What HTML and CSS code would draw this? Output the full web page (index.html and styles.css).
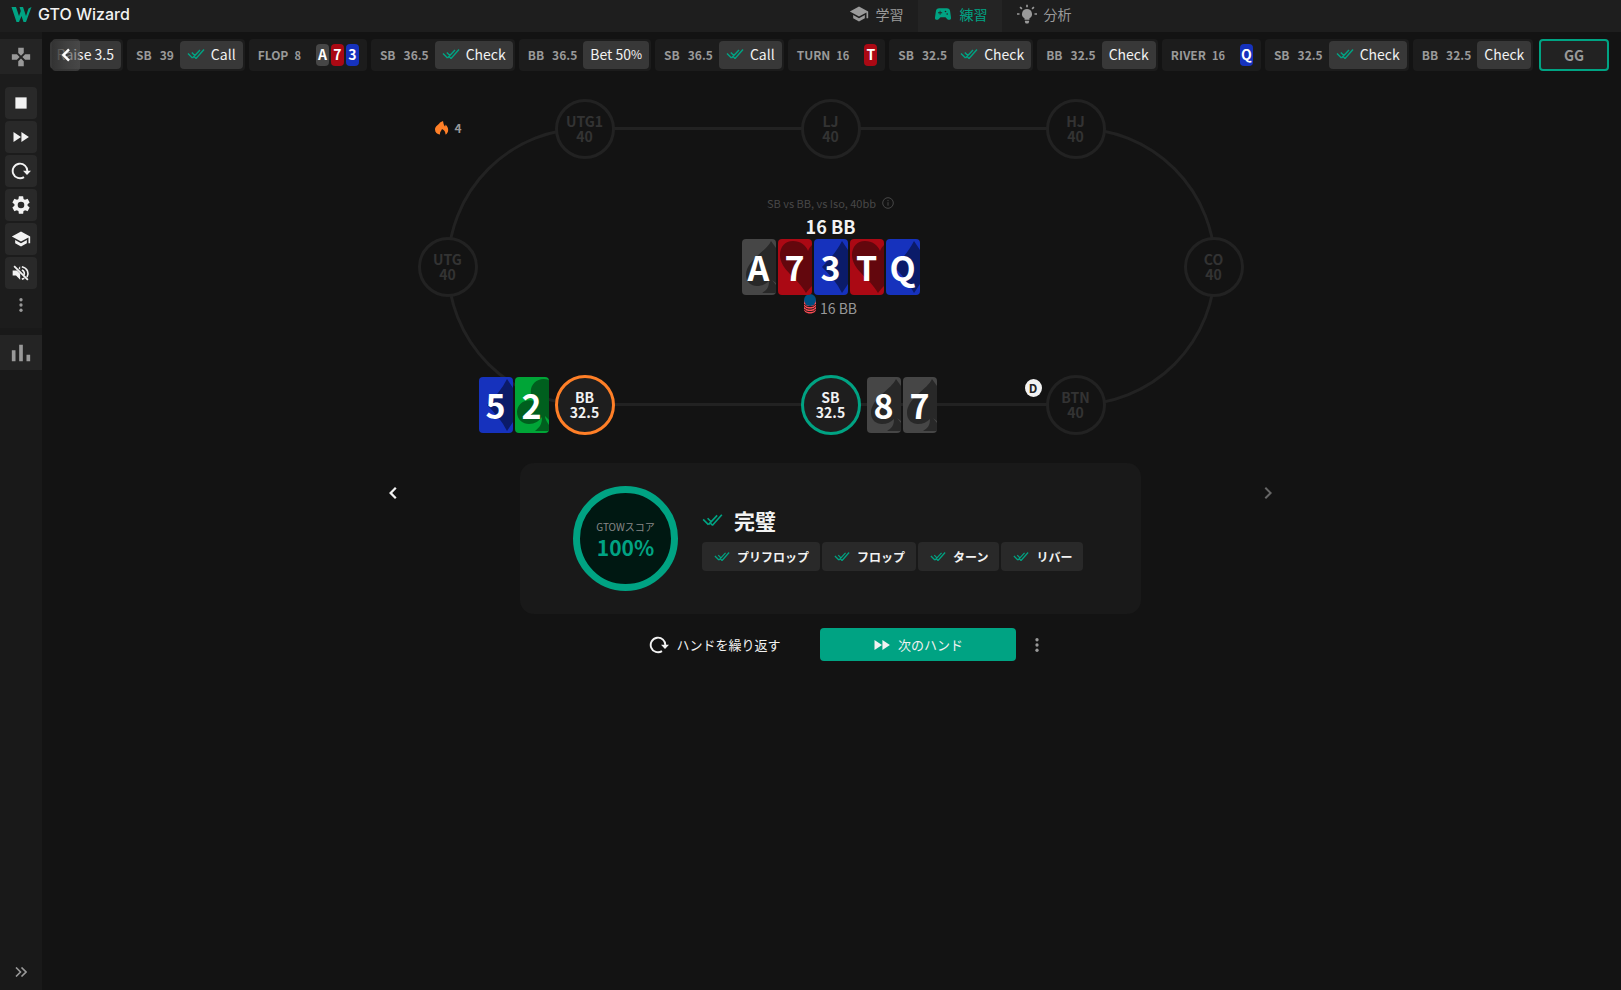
FILE: index.html
```html
<!DOCTYPE html>
<html lang="ja">
<head>
<meta charset="utf-8">
<title>GTO Wizard</title>
<link rel="stylesheet" href="styles.css">
</head>
<body>
<svg class="sprite" aria-hidden="true">
  <symbol id="checks" viewBox="0 0 18 12"><path d="M1 5.500l4.500 4.500M4.800 4.500l3 3M5.500 10L13 2M9 10.500L17 1.500M9 10.500L7.500 9" fill="none" stroke="currentColor" stroke-width="1.400"/></symbol>
  <symbol id="cap" viewBox="0 0 24 24"><path fill="currentColor" d="M5 13.200v4L12 21l7-3.800v-4L12 17l-7-3.800zM12 3L1 9l11 6 9-4.900V17h2V9L12 3z"/></symbol>
  <symbol id="ff" viewBox="0 0 24 24"><path fill="currentColor" d="M3 18l9-6-9-6v12zm9.500-12v12l9-6z"/></symbol>
  <symbol id="dots" viewBox="0 0 24 24"><g fill="currentColor"><circle cx="12" cy="5" r="2.200"/><circle cx="12" cy="12" r="2.200"/><circle cx="12" cy="19" r="2.200"/></g></symbol>
  <symbol id="repeat" viewBox="0 0 20 18"><path fill="none" stroke="currentColor" stroke-width="1.900" d="M16.300 9.500A7.300 7.300 0 1 0 13 15.100"/><path fill="currentColor" d="M12 8.800h8l-4 4.200z"/></symbol>
  <symbol id="left" viewBox="0 0 24 24"><path fill="currentColor" d="M15.600 7.600L14 6l-6 6 6 6 1.600-1.600L11.200 12z"/></symbol>
  <symbol id="right" viewBox="0 0 24 24"><path fill="currentColor" d="M8.600 16.600L10 18l6-6-6-6-1.400 1.400L13.200 12z"/></symbol>
  <symbol id="spade" viewBox="0 0 34 56"><path fill="currentColor" d="M29 2C25 12 4 21 4 36c0 7 5 11 11 11 5 0 9-2 12-5 0 6-2 9-7 12h14v-8l-4-5 4 3V9z"/></symbol>
  <symbol id="heart" viewBox="0 0 34 56"><path fill="currentColor" d="M34 6c-1 1-3 3-4 6C28 6 22 2 15 2 7 2 2 8 2 16c0 15 18 23 26 38 2-3 4-5 6-7z"/></symbol>
  <symbol id="diamond" viewBox="0 0 34 56"><path fill="currentColor" d="M28 2C23 12 16 20 8 28c8 8 15 16 20 26l6-9V11z"/></symbol>
  <symbol id="club" viewBox="0 0 34 56"><path fill="currentColor" d="M34 3C24-1 14 7 16 17c1 3 2 5 3 7C10 21 2 27 2 35c0 8 6 12 12 12 6 0 10-3 13-7 0 7-2 10-7 14h14v-6c-2-3-4-6-4-9l4 4z"/></symbol>
</svg>

<header class="topbar">
  <a class="brand" href="#"><svg class="brand-mark" viewBox="0 0 20 15"><path fill="#00a383" d="M0 0h4.500l3 9 1.800-5L8 0h3.500l3 9L17 1.500 20 0l-5.500 15h-2.500L10 9l-2.500 6H5z"/></svg>GTO Wizard</a>
  <nav class="tabs">
    <a class="tab" href="#"><svg class="i20"><use href="#cap"/></svg>学習</a>
    <a class="tab tab-on" href="#"><svg class="i20" viewBox="0 0 24 24"><path fill="currentColor" fill-rule="evenodd" d="M21.600 16.100l-1.100-7.800A4 4 0 0 0 16.500 5h-9a4 4 0 0 0-4 3.300l-1.100 7.800A2.550 2.550 0 0 0 4.900 19c.7 0 1.300-.3 1.800-.8L9 16h6l2.200 2.200c.5.500 1.200.8 1.800.8a2.550 2.550 0 0 0 2.600-2.900zM11 11H9v2H8v-2H6v-1h2V8h1v2h2v1zm4-1a1 1 0 1 1 0-2 1 1 0 0 1 0 2zm2 3a1 1 0 1 1 0-2 1 1 0 0 1 0 2z"/></svg>練習</a>
    <a class="tab" href="#"><svg class="i20" viewBox="0 0 24 24"><path fill="currentColor" d="M12 6a6 6 0 0 0-3 11.200V19h6v-1.800A6 6 0 0 0 12 6zM9.500 20h5v1.500l-1 2h-3l-1-2zM11 1h2v3h-2zM0 11h3v2H0zM21 11h3v2h-3zM3 4.400L4.400 3l2.200 2.200-1.400 1.400zM17.400 5.200L19.600 3 21 4.400l-2.200 2.200z"/></svg>分析</a>
  </nav>
</header>

<div class="app">
  <aside class="side">
    <button class="side-tab" aria-label="練習モード"><svg class="i22" viewBox="0 0 24 24"><path fill="currentColor" d="M15 7.500V2H9v5.500l3 3 3-3zM7.500 9H2v6h5.500l3-3-3-3zM9 16.500V22h6v-5.500l-3-3-3 3zM16.500 9l-3 3 3 3H22V9z"/></svg></button>
    <div class="tools">
      <button class="tool" aria-label="停止"><svg class="i18" viewBox="0 0 24 24"><path fill="currentColor" d="M4.500 4.500h15v15h-15z"/></svg></button>
      <button class="tool" aria-label="次へ"><svg class="i20"><use href="#ff"/></svg></button>
      <button class="tool" aria-label="繰り返す"><svg class="i20"><use href="#repeat"/></svg></button>
      <button class="tool" aria-label="設定"><svg class="i22" viewBox="0 0 24 24"><path fill="currentColor" d="M19.140 12.940c.04-.3.060-.61.060-.94s-.02-.64-.07-.94l2.030-1.580a.49.49 0 0 0 .12-.61l-1.920-3.320a.49.49 0 0 0-.59-.22l-2.390.96a7 7 0 0 0-1.620-.94l-.36-2.540A.48.48 0 0 0 13.920 2.400h-3.840c-.24 0-.43.170-.47.410l-.36 2.540c-.59.240-1.130.570-1.620.940l-2.390-.96a.48.48 0 0 0-.59.220L2.740 8.870a.48.48 0 0 0 .12.610l2.030 1.580c-.05.300-.09.630-.09.940s.02.640.070.940l-2.030 1.580a.49.49 0 0 0-.12.610l1.920 3.320c.12.220.37.290.59.220l2.390-.96c.5.380 1.030.700 1.620.940l.36 2.540c.05.240.24.410.48.410h3.840c.24 0 .44-.17.470-.41l.36-2.540c.59-.24 1.130-.56 1.620-.94l2.390.96c.22.080.47 0 .59-.22l1.920-3.320a.48.48 0 0 0-.12-.61zM12 15.600a3.600 3.600 0 1 1 0-7.200 3.600 3.600 0 0 1 0 7.200z"/></svg></button>
      <button class="tool" aria-label="学習"><svg class="i20"><use href="#cap"/></svg></button>
      <button class="tool" aria-label="ミュート"><svg class="i20" viewBox="0 0 24 24"><path fill="currentColor" d="M2 9v6h4l5 5v-7L7 9zM11 4L9 6.200l2 2zM3 4.500L4.500 3 21 19.500 19.500 21z"/><path fill="none" stroke="currentColor" stroke-width="2" d="M13 4.500c7 1.500 9 8 6.200 12.500M13 8.500c3 1 3.500 4 2.500 6M13 19.500l3-1.200"/></svg></button>
      <button class="tool tool-plain" aria-label="その他"><svg class="i18"><use href="#dots"/></svg></button>
    </div>
    <button class="side-tab" aria-label="統計"><svg class="i22" viewBox="0 0 24 24"><path fill="currentColor" d="M2 9h4v12H2zM10 3h4v18h-4zM18 14h4v7h-4z"/></svg></button>
    <button class="expand" aria-label="展開"><svg viewBox="0 0 12 10"><path fill="none" stroke="currentColor" stroke-width="1.600" d="M1 .5L5.500 5 1 9.500M6.500.5L11 5 6.500 9.500"/></svg></button>
  </aside>

  <main class="main">
    <div class="history">
      <button class="back" aria-label="戻る"><svg><use href="#left"/></svg></button>
      <div class="step step-first"><button class="act">Raise 3.5</button></div>
      <div class="step"><span class="pos">SB</span><span class="stack">39</span><button class="act"><svg class="chk"><use href="#checks"/></svg>Call</button></div>
      <div class="step street"><span class="pos">FLOP</span><span class="pot">8</span><span class="mini black">A</span><span class="mini red">7</span><span class="mini blue">3</span></div>
      <div class="step"><span class="pos">SB</span><span class="stack">36.5</span><button class="act"><svg class="chk"><use href="#checks"/></svg>Check</button></div>
      <div class="step"><span class="pos">BB</span><span class="stack">36.5</span><button class="act">Bet 50<small>%</small></button></div>
      <div class="step"><span class="pos">SB</span><span class="stack">36.5</span><button class="act"><svg class="chk"><use href="#checks"/></svg>Call</button></div>
      <div class="step street"><span class="pos">TURN</span><span class="pot">16</span><span class="mini red">T</span></div>
      <div class="step"><span class="pos">SB</span><span class="stack">32.5</span><button class="act"><svg class="chk"><use href="#checks"/></svg>Check</button></div>
      <div class="step"><span class="pos">BB</span><span class="stack">32.5</span><button class="act">Check</button></div>
      <div class="step street"><span class="pos">RIVER</span><span class="pot">16</span><span class="mini blue">Q</span></div>
      <div class="step"><span class="pos">SB</span><span class="stack">32.5</span><button class="act"><svg class="chk"><use href="#checks"/></svg>Check</button></div>
      <div class="step"><span class="pos">BB</span><span class="stack">32.5</span><button class="act">Check</button></div>
      <button class="gg">GG</button>
    </div>

    <section class="table">
      <svg class="felt" viewBox="0 0 832 336"><rect x="32" y="29.500" width="767" height="276" rx="138" fill="none" stroke="#222" stroke-width="3"/></svg>
      <div class="streak"><svg viewBox="0 0 14 14"><path fill="#ff7f27" d="M8 0c.5 2 .5 4 2 5.500.5-.5.500-1.500.500-2C13 6 13.500 8 13 10.500c-.5 1.500-1.500 3-2.500 3C10.500 11 9.500 9 7 8c-.5 2-2.500 3-2 5.500-3-.5-5-2-5-5C0 5 4 3.500 5 1.500z"/></svg>4</div>
      <div class="seat utg1"><span>UTG1</span><span>40</span></div>
      <div class="seat lj"><span>LJ</span><span>40</span></div>
      <div class="seat hj"><span>HJ</span><span>40</span></div>
      <div class="seat utg"><span>UTG</span><span>40</span></div>
      <div class="seat co"><span>CO</span><span>40</span></div>
      <div class="seat bb"><span>BB</span><span>32.5</span></div>
      <div class="seat sb"><span>SB</span><span>32.5</span></div>
      <div class="seat btn"><span>BTN</span><span>40</span></div>
      <span class="dealer">D</span>
      <div class="hand hand-bb"><span class="card blue"><svg><use href="#diamond"/></svg><b>5</b></span><span class="card green"><svg><use href="#club"/></svg><b>2</b></span></div>
      <div class="hand hand-sb"><span class="card black"><svg><use href="#spade"/></svg><b>8</b></span><span class="card black"><svg><use href="#spade"/></svg><b>7</b></span></div>
      <div class="center">
        <p class="spot">SB vs BB, vs Iso, 40bb <svg viewBox="0 0 12 12"><circle cx="6" cy="6" r="5.300" fill="none" stroke="currentColor"/><path stroke="currentColor" d="M6 5.200v3.500M6 3v1.200"/></svg></p>
        <p class="total">16 BB</p>
        <div class="board">
          <span class="card black"><svg><use href="#spade"/></svg><b>A</b></span><span class="card red"><svg><use href="#heart"/></svg><b>7</b></span><span class="card blue"><svg><use href="#diamond"/></svg><b>3</b></span><span class="card red"><svg><use href="#heart"/></svg><b>T</b></span><span class="card blue"><svg><use href="#diamond"/></svg><b>Q</b></span>
        </div>
        <p class="chips"><svg viewBox="0 0 12 20"><path fill="#ff4d55" d="M0 6h12v9c0 6-12 6-12 0z"/><path fill="none" stroke="#141414" d="M.5 10c1 3.500 10 3.500 11 0M.5 12.500c1 3.500 10 3.500 11 0M.5 15c1 3.500 10 3.500 11 0"/><circle cx="6" cy="6" r="6" fill="#005082"/></svg>16 BB</p>
      </div>
    </section>

    <section class="result">
      <button class="turn" aria-label="前へ"><svg><use href="#left"/></svg></button>
      <div class="panel">
        <div class="score"><span>GTOWスコア</span><strong>100%</strong></div>
        <div>
          <h1 class="verdict"><svg><use href="#checks"/></svg>完璧</h1>
          <div class="streets">
            <button><svg><use href="#checks"/></svg>プリフロップ</button>
            <button><svg><use href="#checks"/></svg>フロップ</button>
            <button><svg><use href="#checks"/></svg>ターン</button>
            <button><svg><use href="#checks"/></svg>リバー</button>
          </div>
        </div>
      </div>
      <button class="turn turn-off" aria-label="次へ"><svg><use href="#right"/></svg></button>
    </section>

    <div class="actions">
      <button class="again"><svg class="i20"><use href="#repeat"/></svg>ハンドを繰り返す</button>
      <button class="next"><svg class="i20"><use href="#ff"/></svg>次のハンド</button>
      <button class="more" aria-label="その他"><svg class="i18"><use href="#dots"/></svg></button>
    </div>
  </main>
</div>
</body>
</html>
```
FILE: styles.css
```css
* { box-sizing: border-box; }
body {
  margin: 0;
  min-height: 100vh;
  display: flex;
  flex-direction: column;
  background: #131313;
  color: #f2f2f2;
  font: 14px/20px "Noto Sans CJK JP", sans-serif;
}
button { border: 0; padding: 0; background: none; color: inherit; font: inherit; cursor: pointer; }
a { color: inherit; text-decoration: none; }
p, h1 { margin: 0; }
svg { display: block; flex: none; }
.sprite { position: absolute; width: 0; height: 0; }
.i18 { width: 18px; height: 18px; }
.i20 { width: 20px; height: 20px; }
.i22 { width: 22px; height: 22px; }

.topbar { display: grid; grid-template-columns: 1fr auto 1fr; height: 32px; background: #1e1e1e; }
.brand { display: flex; align-items: center; gap: 6px; padding: 0 0 4px 11px; font: 500 16px/20px Inter, sans-serif; color: #f2f2f2; }
.brand-mark { width: 21px; height: 15px; }
.tabs { display: flex; margin-left: 298px; }
.tab { display: flex; align-items: center; gap: 7px; padding: 0 14px 4px 15px; color: #9a9a9a; }
.tab-on { background: #242424; color: #00a383; }

.app { flex: 1; display: flex; }
.side { width: 42px; flex: none; display: flex; flex-direction: column; padding-top: 7px; background: #191919; color: #999; }
.side-tab { height: 35px; display: grid; place-items: center; background: #242424; }
.tools { display: flex; flex-direction: column; align-items: center; gap: 2px; padding: 13px 0 9px; margin-bottom: 7px; background: #1c1c1c; }
.tool { width: 32px; height: 32px; display: grid; place-items: center; border-radius: 4px; background: #292929; color: #f2f2f2; }
.tool-plain { height: 28px; background: none; color: #999; }
.expand { margin-top: auto; height: 36px; display: grid; place-items: center; }
.expand svg { width: 12px; height: 10px; }

.main { flex: 1; min-width: 0; }
.history { position: relative; display: flex; gap: 4px; padding: 7px 12px 0 10px; overflow: hidden; }
.step { flex: none; height: 32px; display: flex; align-items: center; padding: 0 2px 0 9px; border-radius: 4px; background: #1c1c1c; color: #999; white-space: nowrap; }
.step-first { padding-left: 2px; width: 71px; justify-content: flex-end; }
.pos, .stack { font-weight: 700; font-size: 12px; }
.pos { margin-right: 8px; }
.stack { margin-right: 6px; }
.act { height: 28px; display: flex; align-items: center; padding: 0 7px 2px; border-radius: 4px; background: #383838; color: #f2f2f2; font-weight: 400; }
.act small { font-size: 12px; }
.chk { width: 18px; height: 12px; margin-right: 6px; color: #00a383; }
.street { padding-right: 8px; }
.pot { font-size: 11px; font-weight: 700; margin: 0 13px 0 -2px; }
.mini { width: 13px; height: 22px; margin-left: 2px; border-radius: 4px; font-weight: 700; line-height: 21px; text-align: center; }
.back { position: absolute; left: 10px; top: 7px; width: 28px; height: 32px; display: grid; place-items: center; border-radius: 4px; color: #fff; background: linear-gradient(90deg, #333, #444a 50%, #5558); }
.back svg { width: 26px; height: 26px; }
.gg { flex: none; width: 70px; height: 32px; margin-left: auto; border: 2px solid #00a383; border-radius: 4px; background: #222; color: #999; font-weight: 700; line-height: 18px; }

.black { background: #464646; color: #282828; }
.red { background: #ab0914; color: #63070d; }
.blue { background: #1632bd; color: #0b1b69; }
.green { background: #00a537; color: #005f1e; }
.mini.black, .mini.red, .mini.blue { color: #fff; }
.card { position: relative; width: 34px; height: 56px; border-radius: 4px; overflow: hidden; display: grid; }
.card > * { grid-area: 1 / 1; }
.card svg { width: 34px; height: 56px; }
.card b { position: relative; color: #fff; font-size: 34px; line-height: 56px; text-align: center; }

.table { position: relative; width: 832px; height: 336px; margin: 28px auto 0; }
.felt { position: absolute; left: 0; top: 0; width: 832px; height: 336px; }
.seat { position: absolute; width: 60px; height: 60px; display: flex; flex-direction: column; align-items: center; justify-content: center; border: 3px solid #222; border-radius: 50%; background: #131313; color: #333; font-weight: 700; line-height: 15px; }
.utg1, .bb { left: 139px; }
.lj, .sb { left: 385px; }
.hj, .btn { left: 630px; }
.utg1, .lj, .hj { top: 0; }
.utg, .co { top: 138px; }
.utg { left: 2px; }
.co { left: 768px; }
.bb, .sb, .btn { top: 276px; }
.bb, .sb { background: #1e1e1e; color: #f2f2f2; }
.bb { border-color: #ff7f27; }
.sb { border-color: #00a383; }
.dealer { position: absolute; left: 609px; top: 280px; width: 17px; height: 18px; border-radius: 50%; background: #f2f2f2; color: #222; font-size: 12px; font-weight: 700; line-height: 18px; text-align: center; }
.hand { position: absolute; top: 278px; display: flex; gap: 2px; }
.hand-bb { left: 63px; }
.hand-sb { left: 451px; }
.streak { position: absolute; left: 19px; top: 19px; display: flex; align-items: center; gap: 6px; color: #999; font-size: 12px; font-weight: 700; }
.streak svg { width: 14px; height: 14px; }
.center { position: absolute; left: 0; right: 2px; top: 94px; display: flex; flex-direction: column; align-items: center; }
.spot { display: flex; align-items: center; gap: 6px; color: #484848; font-size: 11px; }
.spot svg { width: 12px; height: 12px; }
.total { font-size: 18px; font-weight: 700; line-height: 26px; }
.board { display: flex; gap: 2px; }
.chips { display: flex; align-items: center; gap: 4px; color: #999; height: 26px; }
.chips svg { width: 12px; height: 20px; margin-top: -8px; }

.result { display: flex; justify-content: center; align-items: flex-start; gap: 115px; margin-top: 28px; padding-right: 2px; }
.turn { width: 24px; height: 24px; margin-top: 18px; }
.turn svg { width: 24px; height: 24px; }
.turn-off { color: #666; }
.panel { width: 621px; height: 151px; display: flex; align-items: center; gap: 24px; padding-left: 53px; border-radius: 14px; background: #191919; }
.score { width: 105px; height: 105px; display: flex; flex-direction: column; align-items: center; justify-content: center; border: 7px solid #00a383; border-radius: 50%; background: #001812; }
.score span { color: #888; font-size: 10px; line-height: 16px; }
.score strong { color: #00a383; font-size: 21px; line-height: 24px; }
.verdict { display: flex; align-items: center; gap: 11px; font-size: 21px; line-height: 28px; margin-bottom: 8px; }
.verdict svg { width: 21px; height: 14px; color: #00a383; }
.streets { display: flex; gap: 2px; }
.streets button { height: 29px; display: flex; align-items: center; gap: 7px; padding: 0 11px 0 12px; border-radius: 4px; background: #292929; font-size: 12px; font-weight: 700; white-space: nowrap; }
.streets svg { width: 16px; height: 11px; color: #00a383; }

.actions { display: flex; justify-content: center; align-items: center; margin-top: 14px; padding-left: 32px; font-size: 13px; }
.again { display: flex; align-items: center; gap: 7px; margin-right: 39px; }
.next { width: 196px; height: 33px; display: flex; align-items: center; justify-content: center; gap: 6px; border-radius: 4px; background: #00a383; }
.more { margin-left: 12px; color: #999; }
```
